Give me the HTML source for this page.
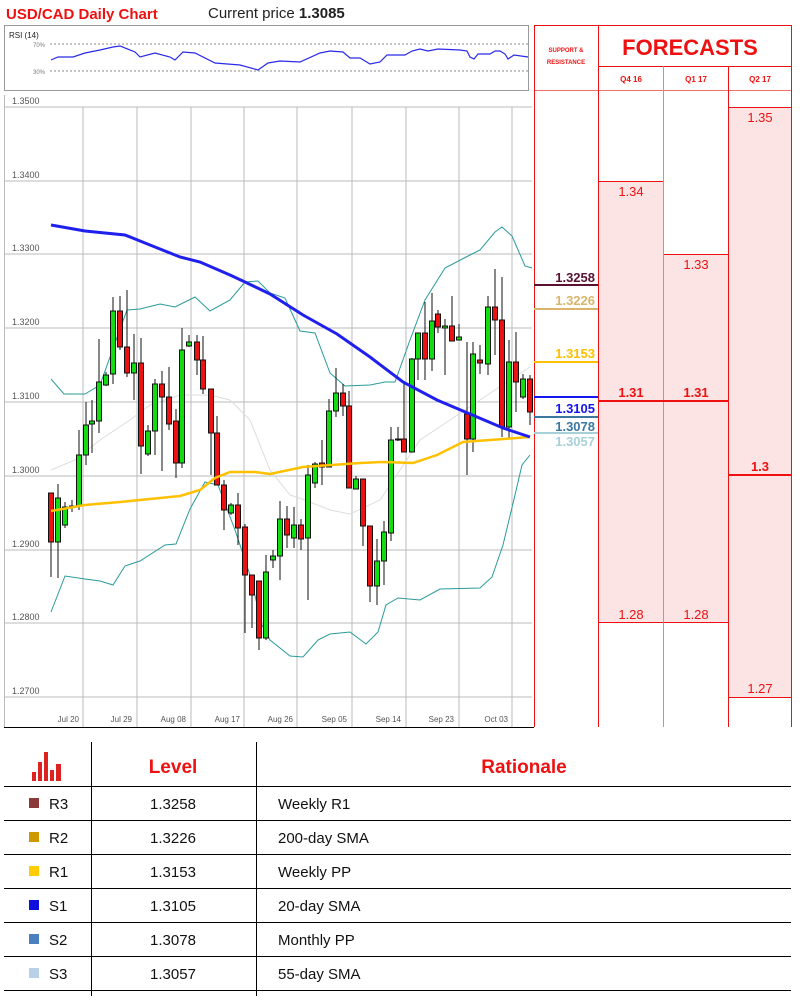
<!DOCTYPE html>
<html><head><meta charset="utf-8"><style>
body{margin:0;background:#fff;width:803px;height:996px;overflow:hidden;font-family:"Liberation Sans",sans-serif}
svg text{font-family:"Liberation Sans",sans-serif}
</style></head><body>
<svg width="803" height="996" viewBox="0 0 803 996" xmlns="http://www.w3.org/2000/svg">
<text x="6" y="19" font-size="15" font-weight="bold" fill="#ee1111">USD/CAD Daily Chart</text>
<text x="208" y="18" font-size="15" fill="#222">Current price <tspan font-weight="bold">1.3085</tspan></text>
<!-- RSI panel -->
<rect x="4.5" y="25.5" width="524" height="65" fill="#fff" stroke="#999"/>
<text x="9" y="38" font-size="8" fill="#222">RSI (14)</text>
<line x1="50" y1="44" x2="528" y2="44" stroke="#888" stroke-dasharray="2,2"/>
<line x1="50" y1="71" x2="528" y2="71" stroke="#888" stroke-dasharray="2,2"/>
<text x="33" y="47" font-size="6" fill="#777">70%</text>
<text x="33" y="74" font-size="6" fill="#777">30%</text>
<polyline fill="none" stroke="#2a2ae8" stroke-width="1.2" points="51,60 58,57 73,57 85,53 100,50 113,47 120,46 135,52 140,57 155,53 170,57 175,60 183,52 195,53 215,63 240,65 258,70 268,63 280,61 300,62 320,53 330,51 343,52 350,58 360,58 370,64 380,62 387,55 405,55 412,51 420,49 428,51 438,49 460,50 467,51 470,57 474,59 478,54 490,54 495,51 500,51 505,54 508,59 514,55 528,57"/>
<!-- main chart grid -->
<g stroke="#bbb" stroke-width="1">
<line x1="4" y1="107" x2="532" y2="107"/><line x1="4" y1="181" x2="532" y2="181"/><line x1="4" y1="254" x2="532" y2="254"/><line x1="4" y1="328" x2="532" y2="328"/><line x1="4" y1="402" x2="532" y2="402"/><line x1="4" y1="476" x2="532" y2="476"/><line x1="4" y1="550" x2="532" y2="550"/><line x1="4" y1="623" x2="532" y2="623"/><line x1="4" y1="697" x2="532" y2="697"/>
<line x1="83" y1="107" x2="83" y2="727"/><line x1="137" y1="107" x2="137" y2="727"/><line x1="191" y1="107" x2="191" y2="727"/><line x1="244" y1="107" x2="244" y2="727"/><line x1="297" y1="107" x2="297" y2="727"/><line x1="352" y1="107" x2="352" y2="727"/><line x1="406" y1="107" x2="406" y2="727"/><line x1="459" y1="107" x2="459" y2="727"/><line x1="512" y1="107" x2="512" y2="727"/>
<line x1="4.5" y1="95" x2="4.5" y2="727"/>
</g>
<g font-size="9" fill="#555">
<text x="12" y="104">1.3500</text><text x="12" y="178">1.3400</text><text x="12" y="251">1.3300</text><text x="12" y="325">1.3200</text><text x="12" y="399">1.3100</text><text x="12" y="473">1.3000</text><text x="12" y="547">1.2900</text><text x="12" y="620">1.2800</text><text x="12" y="694">1.2700</text>
</g>
<g font-size="8" fill="#555" text-anchor="end">
<text x="79" y="722">Jul 20</text><text x="132" y="722">Jul 29</text><text x="186" y="722">Aug 08</text><text x="240" y="722">Aug 17</text><text x="293" y="722">Aug 26</text><text x="347" y="722">Sep 05</text><text x="401" y="722">Sep 14</text><text x="454" y="722">Sep 23</text><text x="508" y="722">Oct 03</text>
</g>
<line x1="4" y1="727.5" x2="534" y2="727.5" stroke="#000"/>
<!-- mid band -->
<polyline fill="none" stroke="#ddd" stroke-width="1" points="51,470 75,460 100,440 130,420 150,405 180,395 210,395 230,400 250,420 270,470 290,495 305,500 330,510 350,514 380,500 420,440 450,420 480,400 510,380 530,367"/>
<!-- bollinger -->
<polyline fill="none" stroke="#2a9a9a" stroke-width="1" points="51,379 64,394 85,394 100,385 115,343 127,310 140,309 160,304 175,307 195,297 210,311 230,300 245,282 258,281 270,293 285,298 300,331 315,333 330,373 345,386 370,385 385,382 395,382 410,340 425,300 445,268 470,255 480,250 495,232 502,227 512,236 525,266 532,268"/>
<polyline fill="none" stroke="#2a9a9a" stroke-width="1" points="51,612 65,576 85,579 100,581 113,585 125,566 140,561 165,545 176,544 190,509 205,482 218,485 235,530 250,575 262,625 270,640 290,656 303,657 318,640 330,634 350,632 358,638 366,644 378,632 386,605 398,598 420,600 440,589 480,588 492,577 503,545 515,495 522,465 530,455"/>
<!-- candles -->
<g stroke="#111" stroke-width="1">
<line x1="51" y1="493" x2="51" y2="577"/><rect x="48.5" y="493" width="5" height="49" fill="#ee1111"/>
<line x1="58" y1="484" x2="58" y2="578"/><rect x="55.5" y="498" width="5" height="44" fill="#11dd11"/>
<line x1="65" y1="502" x2="65" y2="528"/><rect x="62.5" y="507" width="5" height="18" fill="#11dd11"/>
<line x1="72" y1="500" x2="72" y2="512"/><rect x="69.5" y="506" width="5" height="1" fill="#111"/>
<line x1="79" y1="430" x2="79" y2="510"/><rect x="76.5" y="455" width="5" height="51" fill="#11dd11"/>
<line x1="86" y1="402" x2="86" y2="465"/><rect x="83.5" y="425" width="5" height="30" fill="#11dd11"/>
<line x1="92" y1="400" x2="92" y2="453"/><rect x="89.5" y="421" width="5" height="3" fill="#11dd11"/>
<line x1="99" y1="339" x2="99" y2="433"/><rect x="96.5" y="382" width="5" height="39" fill="#11dd11"/>
<line x1="106" y1="372" x2="106" y2="386"/><rect x="103.5" y="375" width="5" height="10" fill="#11dd11"/>
<line x1="113" y1="297" x2="113" y2="384"/><rect x="110.5" y="311" width="5" height="63" fill="#11dd11"/>
<line x1="120" y1="296" x2="120" y2="350"/><rect x="117.5" y="311" width="5" height="36" fill="#ee1111"/>
<line x1="127" y1="290" x2="127" y2="377"/><rect x="124.5" y="347" width="5" height="26" fill="#ee1111"/>
<line x1="134" y1="334" x2="134" y2="400"/><rect x="131.5" y="363" width="5" height="10" fill="#11dd11"/>
<line x1="141" y1="338" x2="141" y2="474"/><rect x="138.5" y="363" width="5" height="83" fill="#ee1111"/>
<line x1="148" y1="425" x2="148" y2="456"/><rect x="145.5" y="431" width="5" height="23" fill="#11dd11"/>
<line x1="155" y1="379" x2="155" y2="455"/><rect x="152.5" y="384" width="5" height="47" fill="#11dd11"/>
<line x1="162" y1="371" x2="162" y2="471"/><rect x="159.5" y="384" width="5" height="13" fill="#ee1111"/>
<line x1="169" y1="367" x2="169" y2="430"/><rect x="166.5" y="397" width="5" height="27" fill="#ee1111"/>
<line x1="176" y1="409" x2="176" y2="478"/><rect x="173.5" y="421" width="5" height="42" fill="#ee1111"/>
<line x1="182" y1="328" x2="182" y2="468"/><rect x="179.5" y="350" width="5" height="113" fill="#11dd11"/>
<line x1="189" y1="335" x2="189" y2="347"/><rect x="186.5" y="342" width="5" height="4" fill="#11dd11"/>
<line x1="197" y1="335" x2="197" y2="375"/><rect x="194.5" y="342" width="5" height="18" fill="#ee1111"/>
<line x1="203" y1="336" x2="203" y2="394"/><rect x="200.5" y="360" width="5" height="29" fill="#ee1111"/>
<line x1="211" y1="389" x2="211" y2="475"/><rect x="208.5" y="389" width="5" height="44" fill="#ee1111"/>
<line x1="217" y1="416" x2="217" y2="485"/><rect x="214.5" y="433" width="5" height="52" fill="#ee1111"/>
<line x1="224" y1="480" x2="224" y2="530"/><rect x="221.5" y="485" width="5" height="25" fill="#ee1111"/>
<line x1="231" y1="503" x2="231" y2="515"/><rect x="228.5" y="505" width="5" height="8" fill="#11dd11"/>
<line x1="238" y1="493" x2="238" y2="545"/><rect x="235.5" y="505" width="5" height="23" fill="#ee1111"/>
<line x1="245" y1="524" x2="245" y2="633"/><rect x="242.5" y="527" width="5" height="48" fill="#ee1111"/>
<line x1="252" y1="575" x2="252" y2="628"/><rect x="249.5" y="575" width="5" height="20" fill="#ee1111"/>
<line x1="259" y1="584" x2="259" y2="650"/><rect x="256.5" y="581" width="5" height="57" fill="#ee1111"/>
<line x1="266" y1="555" x2="266" y2="640"/><rect x="263.5" y="572" width="5" height="66" fill="#11dd11"/>
<line x1="273" y1="550" x2="273" y2="568"/><rect x="270.5" y="556" width="5" height="4" fill="#11dd11"/>
<line x1="280" y1="501" x2="280" y2="580"/><rect x="277.5" y="519" width="5" height="37" fill="#11dd11"/>
<line x1="287" y1="506" x2="287" y2="548"/><rect x="284.5" y="519" width="5" height="16" fill="#ee1111"/>
<line x1="294" y1="507" x2="294" y2="548"/><rect x="291.5" y="525" width="5" height="13" fill="#11dd11"/>
<line x1="301" y1="519" x2="301" y2="550"/><rect x="298.5" y="525" width="5" height="14" fill="#ee1111"/>
<line x1="308" y1="465" x2="308" y2="600"/><rect x="305.5" y="475" width="5" height="63" fill="#11dd11"/>
<line x1="315" y1="462" x2="315" y2="488"/><rect x="312.5" y="464" width="5" height="19" fill="#11dd11"/>
<line x1="322" y1="440" x2="322" y2="485"/><rect x="319.5" y="463" width="5" height="4" fill="#ee1111"/>
<line x1="329" y1="399" x2="329" y2="467"/><rect x="326.5" y="411" width="5" height="56" fill="#11dd11"/>
<line x1="336" y1="368" x2="336" y2="417"/><rect x="333.5" y="393" width="5" height="18" fill="#11dd11"/>
<line x1="343" y1="384" x2="343" y2="416"/><rect x="340.5" y="393" width="5" height="13" fill="#ee1111"/>
<line x1="349" y1="391" x2="349" y2="488"/><rect x="346.5" y="406" width="5" height="82" fill="#ee1111"/>
<line x1="356" y1="476" x2="356" y2="489"/><rect x="353.5" y="479" width="5" height="10" fill="#11dd11"/>
<line x1="363" y1="479" x2="363" y2="546"/><rect x="360.5" y="479" width="5" height="47" fill="#ee1111"/>
<line x1="370" y1="526" x2="370" y2="602"/><rect x="367.5" y="526" width="5" height="60" fill="#ee1111"/>
<line x1="377" y1="539" x2="377" y2="605"/><rect x="374.5" y="561" width="5" height="25" fill="#11dd11"/>
<line x1="384" y1="521" x2="384" y2="585"/><rect x="381.5" y="532" width="5" height="29" fill="#11dd11"/>
<line x1="391" y1="427" x2="391" y2="541"/><rect x="388.5" y="440" width="5" height="93" fill="#11dd11"/>
<line x1="398" y1="427" x2="398" y2="441"/><rect x="395.5" y="439" width="5" height="1" fill="#111"/>
<line x1="404" y1="382" x2="404" y2="452"/><rect x="401.5" y="439" width="5" height="13" fill="#ee1111"/>
<line x1="412" y1="358" x2="412" y2="452"/><rect x="409.5" y="359" width="5" height="93" fill="#11dd11"/>
<line x1="418" y1="333" x2="418" y2="380"/><rect x="415.5" y="333" width="5" height="26" fill="#11dd11"/>
<line x1="425" y1="302" x2="425" y2="380"/><rect x="422.5" y="333" width="5" height="26" fill="#ee1111"/>
<line x1="432" y1="293" x2="432" y2="371"/><rect x="429.5" y="321" width="5" height="38" fill="#11dd11"/>
<line x1="438" y1="310" x2="438" y2="333"/><rect x="435.5" y="314" width="5" height="13" fill="#ee1111"/>
<line x1="445" y1="319" x2="445" y2="375"/><rect x="442.5" y="326" width="5" height="2" fill="#11dd11"/>
<line x1="452" y1="296" x2="452" y2="341"/><rect x="449.5" y="326" width="5" height="15" fill="#ee1111"/>
<line x1="459" y1="324" x2="459" y2="340"/><rect x="456.5" y="337" width="5" height="3" fill="#11dd11"/>
<line x1="467" y1="342" x2="467" y2="475"/><rect x="464.5" y="414" width="5" height="25" fill="#ee1111"/>
<line x1="473" y1="342" x2="473" y2="452"/><rect x="470.5" y="354" width="5" height="85" fill="#11dd11"/>
<line x1="480" y1="345" x2="480" y2="374"/><rect x="477.5" y="360" width="5" height="3" fill="#ee1111"/>
<line x1="488" y1="296" x2="488" y2="375"/><rect x="485.5" y="307" width="5" height="57" fill="#11dd11"/>
<line x1="495" y1="269" x2="495" y2="355"/><rect x="492.5" y="307" width="5" height="13" fill="#ee1111"/>
<line x1="502" y1="277" x2="502" y2="437"/><rect x="499.5" y="320" width="5" height="107" fill="#ee1111"/>
<line x1="509" y1="340" x2="509" y2="439"/><rect x="506.5" y="362" width="5" height="65" fill="#11dd11"/>
<line x1="516" y1="332" x2="516" y2="412"/><rect x="513.5" y="362" width="5" height="20" fill="#ee1111"/>
<line x1="523" y1="374" x2="523" y2="399"/><rect x="520.5" y="379" width="5" height="18" fill="#11dd11"/>
<line x1="530" y1="375" x2="530" y2="425"/><rect x="527.5" y="379" width="5" height="33" fill="#ee1111"/>
</g>
<!-- MAs -->
<polyline fill="none" stroke="#ffc000" stroke-width="2.5" points="51,511 85,505 120,502 150,499 180,496 200,490 215,478 230,472 255,472 270,474 303,467 360,463 383,462 413,463 437,455 463,442 490,440 530,437"/>
<polyline fill="none" stroke="#2020ee" stroke-width="3" points="51,225 85,231 125,235 150,245 180,257 200,262 230,275 245,282 270,294 303,315 337,334 370,357 403,382 437,400 470,414 503,428 530,437"/>
<!-- forecast panel -->
<rect x="598" y="181" width="65" height="441" fill="#fde4e4"/>
<rect x="663" y="254" width="65" height="368" fill="#fde4e4"/>
<rect x="728" y="107" width="63" height="590" fill="#fde4e4"/>
<g stroke="#ee1111" stroke-width="1">
<line x1="598" y1="181.5" x2="663" y2="181.5"/><line x1="598" y1="622.5" x2="728" y2="622.5"/>
<line x1="663" y1="254.5" x2="728" y2="254.5"/>
<line x1="728" y1="107.5" x2="791" y2="107.5"/><line x1="728" y1="697.5" x2="791" y2="697.5"/>
<line x1="534" y1="25.5" x2="791" y2="25.5"/><line x1="598" y1="66.5" x2="791" y2="66.5"/><line x1="534" y1="90.5" x2="791" y2="90.5" stroke="#f07070"/>
<line x1="534.5" y1="25" x2="534.5" y2="727"/><line x1="598.5" y1="25" x2="598.5" y2="727"/><line x1="728.5" y1="66" x2="728.5" y2="727"/><line x1="791.5" y1="25" x2="791.5" y2="727"/>
<line x1="663.5" y1="66" x2="663.5" y2="727" stroke="#f08080"/>
</g>
<line x1="598" y1="401" x2="728" y2="401" stroke="#ee1111" stroke-width="2"/>
<line x1="728" y1="475" x2="791" y2="475" stroke="#ee1111" stroke-width="2"/>
<text x="566" y="52" font-size="6" font-weight="bold" fill="#ee1111" text-anchor="middle">SUPPORT &amp;</text>
<text x="566" y="64" font-size="6" font-weight="bold" fill="#ee1111" text-anchor="middle">RESISTANCE</text>
<text x="690" y="55" font-size="22" font-weight="bold" fill="#ee1111" text-anchor="middle">FORECASTS</text>
<g font-size="8" font-weight="bold" fill="#ee1111" text-anchor="middle"><text x="631" y="82">Q4 16</text><text x="696" y="82">Q1 17</text><text x="760" y="82">Q2 17</text></g>
<g font-size="13" fill="#ee1111" text-anchor="middle">
<text x="631" y="196">1.34</text><text x="631" y="619">1.28</text><text x="696" y="269">1.33</text><text x="696" y="619">1.28</text><text x="760" y="122">1.35</text><text x="760" y="693">1.27</text>
<text x="631" y="397" font-weight="bold">1.31</text><text x="696" y="397" font-weight="bold">1.31</text><text x="760" y="471" font-weight="bold">1.3</text>
</g>
<!-- S&R lines -->
<g stroke-width="2"><line x1="534" y1="285" x2="598" y2="285" stroke="#5a1030"/><line x1="534" y1="309" x2="598" y2="309" stroke="#d9b56c"/><line x1="534" y1="362" x2="598" y2="362" stroke="#ffc000"/><line x1="534" y1="397" x2="598" y2="397" stroke="#1515ee"/><line x1="534" y1="417" x2="598" y2="417" stroke="#3a78a0"/><line x1="534" y1="433" x2="598" y2="433" stroke="#a8d0d8"/></g>
<g font-size="13" font-weight="bold" text-anchor="end">
<text x="595" y="282" fill="#5a1030">1.3258</text><text x="595" y="305" fill="#d9b56c">1.3226</text><text x="595" y="358" fill="#ffc000">1.3153</text><text x="595" y="413" fill="#1515ee">1.3105</text><text x="595" y="431" fill="#3a78a0">1.3078</text><text x="595" y="446" fill="#a8d0d8">1.3057</text>
</g>
<!-- table -->
<g stroke="#000" stroke-width="1">
<line x1="91.5" y1="742" x2="91.5" y2="996"/><line x1="256.5" y1="742" x2="256.5" y2="996"/>
<line x1="4" y1="786.5" x2="791" y2="786.5"/><line x1="4" y1="820.5" x2="791" y2="820.5"/><line x1="4" y1="854.5" x2="791" y2="854.5"/><line x1="4" y1="888.5" x2="791" y2="888.5"/><line x1="4" y1="922.5" x2="791" y2="922.5"/><line x1="4" y1="956.5" x2="791" y2="956.5"/><line x1="4" y1="990.5" x2="791" y2="990.5"/>
</g>
<g fill="#dd2222"><rect x="32" y="772" width="4" height="9"/><rect x="38" y="762" width="4" height="19"/><rect x="44" y="752" width="4" height="29"/><rect x="50" y="770" width="4" height="11"/><rect x="56" y="764" width="5" height="17"/></g>
<text x="173" y="773" font-size="19" font-weight="bold" fill="#ee1111" text-anchor="middle">Level</text>
<text x="524" y="773" font-size="19" font-weight="bold" fill="#ee1111" text-anchor="middle">Rationale</text>
<g font-size="15" fill="#111">
<rect x="29" y="798" width="10" height="10" fill="#8b3a3a"/><text x="49" y="809">R3</text><text x="173" y="809" text-anchor="middle">1.3258</text><text x="278" y="809">Weekly R1</text>
<rect x="29" y="832" width="10" height="10" fill="#cc9900"/><text x="49" y="843">R2</text><text x="173" y="843" text-anchor="middle">1.3226</text><text x="278" y="843">200-day SMA</text>
<rect x="29" y="866" width="10" height="10" fill="#ffcc00"/><text x="49" y="877">R1</text><text x="173" y="877" text-anchor="middle">1.3153</text><text x="278" y="877">Weekly PP</text>
<rect x="29" y="900" width="10" height="10" fill="#1010dd"/><text x="49" y="911">S1</text><text x="173" y="911" text-anchor="middle">1.3105</text><text x="278" y="911">20-day SMA</text>
<rect x="29" y="934" width="10" height="10" fill="#4a7fc0"/><text x="49" y="945">S2</text><text x="173" y="945" text-anchor="middle">1.3078</text><text x="278" y="945">Monthly PP</text>
<rect x="29" y="968" width="10" height="10" fill="#b8d0e8"/><text x="49" y="979">S3</text><text x="173" y="979" text-anchor="middle">1.3057</text><text x="278" y="979">55-day SMA</text>
</g>
</svg>
</body></html>
